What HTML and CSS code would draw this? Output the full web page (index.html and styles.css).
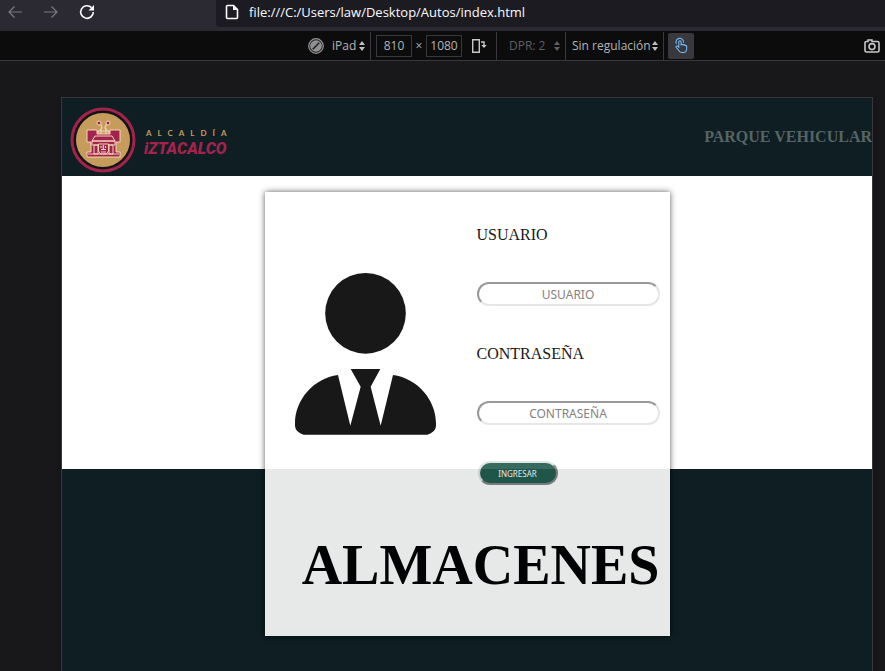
FILE: index.html
```html
<!DOCTYPE html>
<html lang="es">
<head>
<meta charset="utf-8">
<meta name="viewport" content="width=device-width, initial-scale=1">
<title>Parque Vehicular</title>
<link rel="stylesheet" href="styles.css">
</head>
<body>
<nav class="navbar">
  <div class="nav-buttons">
    <button class="icon-button dim" aria-label="Atrás"><svg width="16" height="16" viewBox="0 0 16 16"><path d="M15 8H2M7.500 2.500L2 8l5.500 5.500"/></svg></button>
    <button class="icon-button dim" aria-label="Adelante"><svg width="16" height="16" viewBox="0 0 16 16"><path d="M1 8h13M8.500 2.500L14 8l-5.500 5.500"/></svg></button>
    <button class="icon-button" aria-label="Recargar"><svg width="16" height="16" viewBox="0 0 16 16"><path class="bold" d="M12.500 3.600A6.300 6.300 0 1 0 14.300 8"/><path class="solid" d="M15 1v5.500H9.500z"/></svg></button>
  </div>
  <div class="address">
    <svg width="14" height="16" viewBox="0 0 14 16"><path class="bold" d="M2.500 1.500h6l4 4v8a1 1 0 0 1-1 1h-9a1 1 0 0 1-1-1v-11a1 1 0 0 1 1-1z"/><path class="solid" d="M8 1.500v4.500h4.500z"/></svg>
    <input class="url" type="text" aria-label="Dirección" value="file:///C:/Users/law/Desktop/Autos/index.html">
  </div>
</nav>

<div class="toolbar">
  <div class="tool device">
    <svg width="16" height="16" viewBox="0 0 16 16"><circle cx="8" cy="8" r="7.300" fill="#29292b" stroke="#919193" stroke-width="1.200"/><circle cx="8" cy="8" r="5.800" fill="#919193"/><path d="M4.800 11.200l6.400-6.400" stroke="#202022" stroke-width="1.600"/></svg>
    <select aria-label="Dispositivo"><option>iPad</option></select>
    <svg class="arrows" width="6" height="10" viewBox="0 0 6 10"><path d="M3 0l3 4H0zM3 10L0 6h6z"/></svg>
  </div>
  <div class="tool size">
    <input type="text" aria-label="Ancho" value="810">
    <span class="times">×</span>
    <input type="text" aria-label="Alto" value="1080">
    <button class="rotate" aria-label="Rotar"><svg width="16" height="16" viewBox="0 0 16 16"><path d="M1.700 1.700h6.600v12.600H1.700z" fill="none" stroke="#c8c8ca" stroke-width="1.400"/><path d="M10 4h3v4" fill="none" stroke="#c8c8ca" stroke-width="1.400"/><path d="M10.300 7h5.400L13 10z" fill="#c8c8ca"/></svg></button>
  </div>
  <div class="tool dpr">
    <select aria-label="DPR" disabled><option>DPR: 2</option></select>
    <svg class="arrows" width="6" height="10" viewBox="0 0 6 10"><path d="M3 0l3 4H0zM3 10L0 6h6z"/></svg>
  </div>
  <div class="tool throttle">
    <select aria-label="Regulación"><option>Sin regulación</option></select>
    <svg class="arrows" width="6" height="10" viewBox="0 0 6 10"><path d="M3 0l3 4H0zM3 10L0 6h6z"/></svg>
  </div>
  <button class="touch" aria-label="Simulación táctil"><svg width="14" height="17" viewBox="0 0 16 18"><path d="M5.500 11V4.800a1.300 1.300 0 0 1 2.600 0V9V8.400a1.200 1.200 0 0 1 2.300 0V9a1.100 1.100 0 0 1 2.200 0v.6a1 1 0 0 1 1.900 0V12c0 3-1.500 5-4 5H8.600C6.500 17 5.800 15.500 4.500 13.500L2.300 11c-.6-1.200.8-1.900 1.700-1.200zM2.700 7A4.300 4.300 0 1 1 10.800 5.800"/></svg></button>
  <button class="camera" aria-label="Captura de pantalla"><svg width="16" height="14" viewBox="0 0 16 14"><path d="M3 2.500h1V1h4v1.500h5.500a1.500 1.500 0 0 1 1.500 1.500v7.500a1.500 1.500 0 0 1-1.500 1.500h-11A1.500 1.500 0 0 1 1 11.500V4a1.500 1.500 0 0 1 1.500-1.500z"/><circle cx="8" cy="7.600" r="3"/></svg></button>
</div>

<div class="viewport">
  <header class="site-header">
    <a class="brand" href="#">
      <svg width="66" height="66" viewBox="0 0 66 66">
        <circle cx="33" cy="33" r="31" fill="#161317" stroke="#a2234b" stroke-width="3"/>
        <circle cx="33" cy="33" r="27" fill="#c69c5d"/>
        <g fill="#a2234b" stroke="#f3d5ba" stroke-width="1">
          <path d="M17 23h10v4h13v-4h10v12h-4v10h4v5H17v-5h4V35h-4z"/>
          <path d="M25 29h17l3 5H22zM22 34h23v4H22zM24 38h4v9h-4zM39 38h4v9h-4z"/>
          <path d="M28.500 37h10v7l-2 3h-6l-2-3z"/>
        </g>
        <g fill="none" stroke="#f3d5ba" stroke-width="1.200">
          <path d="M28 27v-3h11v3M31 27v-4M36 27v-4M30 23l2-2-1-3-3-2M37 23l-2-2 1-3 3-2M31 39v2M35.500 39v2M31 42.500h5M31 45h5M33.300 38v4M18 47h31"/>
        </g>
        <g fill="#a2234b" stroke="#f3d5ba" stroke-width="1"><circle cx="29" cy="16" r="2"/><circle cx="38" cy="16" r="2"/></g>
      </svg>
      <span class="brand-text"><span class="brand-top">ALCALDÍA</span><span class="brand-name">iZTACALCO</span></span>
    </a>
    <strong class="section">PARQUE VEHICULAR</strong>
  </header>
  <main class="stage">
    <section class="card">
      <svg class="avatar" viewBox="120 279 423 486" aria-hidden="true"><circle cx="331.500" cy="400" r="121"/><path d="M249 585C175 595 120 660 120 730V738Q122 758 146 764H517Q541 758 543 738V730C543 660 488 595 414 585L377 737L347 620L376 567H287L317 620L286 737Z"/></svg>
      <form class="login">
        <label for="user">USUARIO</label>
        <input id="user" type="text" placeholder="USUARIO">
        <label for="pass">CONTRASEÑA</label>
        <input id="pass" type="password" placeholder="CONTRASEÑA">
        <button type="button">INGRESAR</button>
      </form>
      <h1>ALMACENES</h1>
    </section>
  </main>
</div>
</body>
</html>
```
FILE: styles.css
```css
* { box-sizing: border-box; }

body {
  margin: 0;
  min-height: 100vh;
  display: flex;
  flex-direction: column;
  background: #18181a;
  color: #b4b4b6;
  font-family: "Open Sans", sans-serif;
  font-size: 12px;
}

button, input, select {
  font: inherit;
  color: inherit;
  margin: 0;
}

svg { display: block; flex: none; }

/* Browser bar */
.navbar {
  display: flex;
  height: 31px;
  padding-bottom: 4px;
  background: #2b2a33;
}
.nav-buttons {
  flex: none;
  width: 216px;
  display: flex;
  align-items: center;
  gap: 20px;
  padding: 0 7px 3px;
}
.icon-button {
  border: 0;
  padding: 0;
  background: none;
  color: #fbfbfe;
}
.dim { color: #7a7983; }
.navbar svg {
  fill: none;
  stroke: currentColor;
  stroke-width: 1.2;
}
.navbar .bold { stroke-width: 1.6; }
.navbar .solid { fill: currentColor; stroke: none; }
.address {
  flex: 1;
  display: flex;
  align-items: center;
  gap: 10px;
  padding: 0 8px 3px 9px;
  background: #1c1b22;
  border-bottom-left-radius: 4px;
  color: #fbfbfe;
}
.url {
  flex: 1;
  min-width: 0;
  border: 0;
  padding: 0;
  background: none;
  font-size: 13px;
}

/* Responsive-design toolbar */
.toolbar {
  display: flex;
  align-items: center;
  height: 30px;
  padding: 0 5px 0 308px;
  background: #0c0c0d;
  border-bottom: 1px solid #38383d;
}
.tool {
  display: flex;
  align-items: center;
  height: 28px;
  border-right: 1px solid #38383d;
}
.tool select {
  appearance: none;
  border: 0;
  padding: 0;
  background: none;
}
.arrows { fill: #bebec0; }
.device { padding-right: 5px; }
.device select { margin: 0 2px 0 8px; }
.size { padding: 0 9px 0 5px; }
.size input {
  width: 36px;
  height: 22px;
  padding: 0;
  border: 1px solid #38383d;
  background: none;
  text-align: center;
}
.times { width: 14px; text-align: center; }
.rotate {
  margin-left: 9px;
  padding: 0;
  border: 0;
  background: none;
}
.dpr { padding: 0 5px 0 12px; color: #5f5f62; }
.dpr select { margin-right: 8px; opacity: 1; }
.dpr .arrows { fill: #5f5f62; }
.throttle { padding: 0 5px 0 6px; }
.throttle select { margin-right: 1px; }
.touch {
  width: 26px;
  height: 26px;
  display: grid;
  place-items: center;
  margin-left: 4px;
  padding: 0;
  border: 0;
  border-radius: 2px;
  background: #38383d;
}
.touch svg { fill: none; stroke: #75bfff; stroke-width: 1.2; }
.camera {
  margin-left: auto;
  padding: 0;
  border: 0;
  background: none;
}
.camera svg { fill: none; stroke: #c8c8ca; stroke-width: 1.6; }

/* Simulated page */
.viewport {
  flex: 1;
  display: flex;
  flex-direction: column;
  margin: 36px 12px 0 61px;
  border: 1px solid #38383d;
  border-bottom: 0;
  background: #0e1e22;
  box-shadow: 0 4px 4px #101012;
  color: #000;
  font-family: "Liberation Serif", serif;
  font-size: 16px;
}
.site-header {
  display: flex;
  align-items: center;
  justify-content: space-between;
  height: 78px;
}
.brand {
  display: flex;
  align-items: center;
  gap: 8px;
  padding: 6px 0 0 8px;
  text-decoration: none;
}
.brand-text {
  display: flex;
  flex-direction: column;
  padding-top: 6px;
}
.brand-top {
  color: #c69c5d;
  font: bold 8px/12px Lato, sans-serif;
  letter-spacing: 6px;
  padding-left: 2px;
}
.brand-name {
  color: #a2234b;
  font: italic 900 16px/20px Roboto, sans-serif;
}
.section { color: #566464; line-height: 18px; }
.stage {
  flex: 1;
  display: grid;
  grid-template-rows: 293px 1fr;
  justify-items: center;
}
.stage::before {
  content: "";
  grid-area: 1 / 1;
  justify-self: stretch;
  background: #fff;
}
.card {
  grid-area: 1 / 1 / 3 / 2;
  align-self: start;
  width: 50%;
  min-width: 405px;
  margin-top: 16px;
  padding: 34px 10px 39px;
  display: grid;
  grid-template-columns: 1fr 183px;
  row-gap: 48px;
  background: #fff;
  box-shadow: 0 0 6px rgba(0, 0, 0, 0.7);
  opacity: 0.9;
}
.avatar {
  width: 141px;
  margin: 0 0 4px 20px;
  align-self: center;
}
.login {
  display: flex;
  flex-direction: column;
}
.login label { line-height: 18px; }
.login input {
  height: 24px;
  margin: 38px 0 39px;
  padding: 0 8px;
  border: 2px solid;
  border-color: #8f8f8f #e4e4e4 #e4e4e4 #8f8f8f;
  border-radius: 12px;
  background: #fff;
  font-family: "Noto Sans", sans-serif;
  font-size: 12px;
  text-align: center;
}
.login input[type="password"] { margin-bottom: 36px; }
.login input::placeholder { color: #757575; opacity: 1; }
.login button {
  width: 80px;
  height: 24px;
  margin-left: 1px;
  padding: 0;
  border: 2px solid;
  border-color: #dce4e1 #858585 #858585 #dce4e1;
  border-radius: 12px;
  background: #235b4e;
  color: #fff;
  font-family: "Noto Sans", sans-serif;
  font-size: 8px;
}
.card h1 {
  grid-column: 1 / 3;
  margin: 0;
  font-size: 56px;
  line-height: 64px;
  text-align: right;
}
```
